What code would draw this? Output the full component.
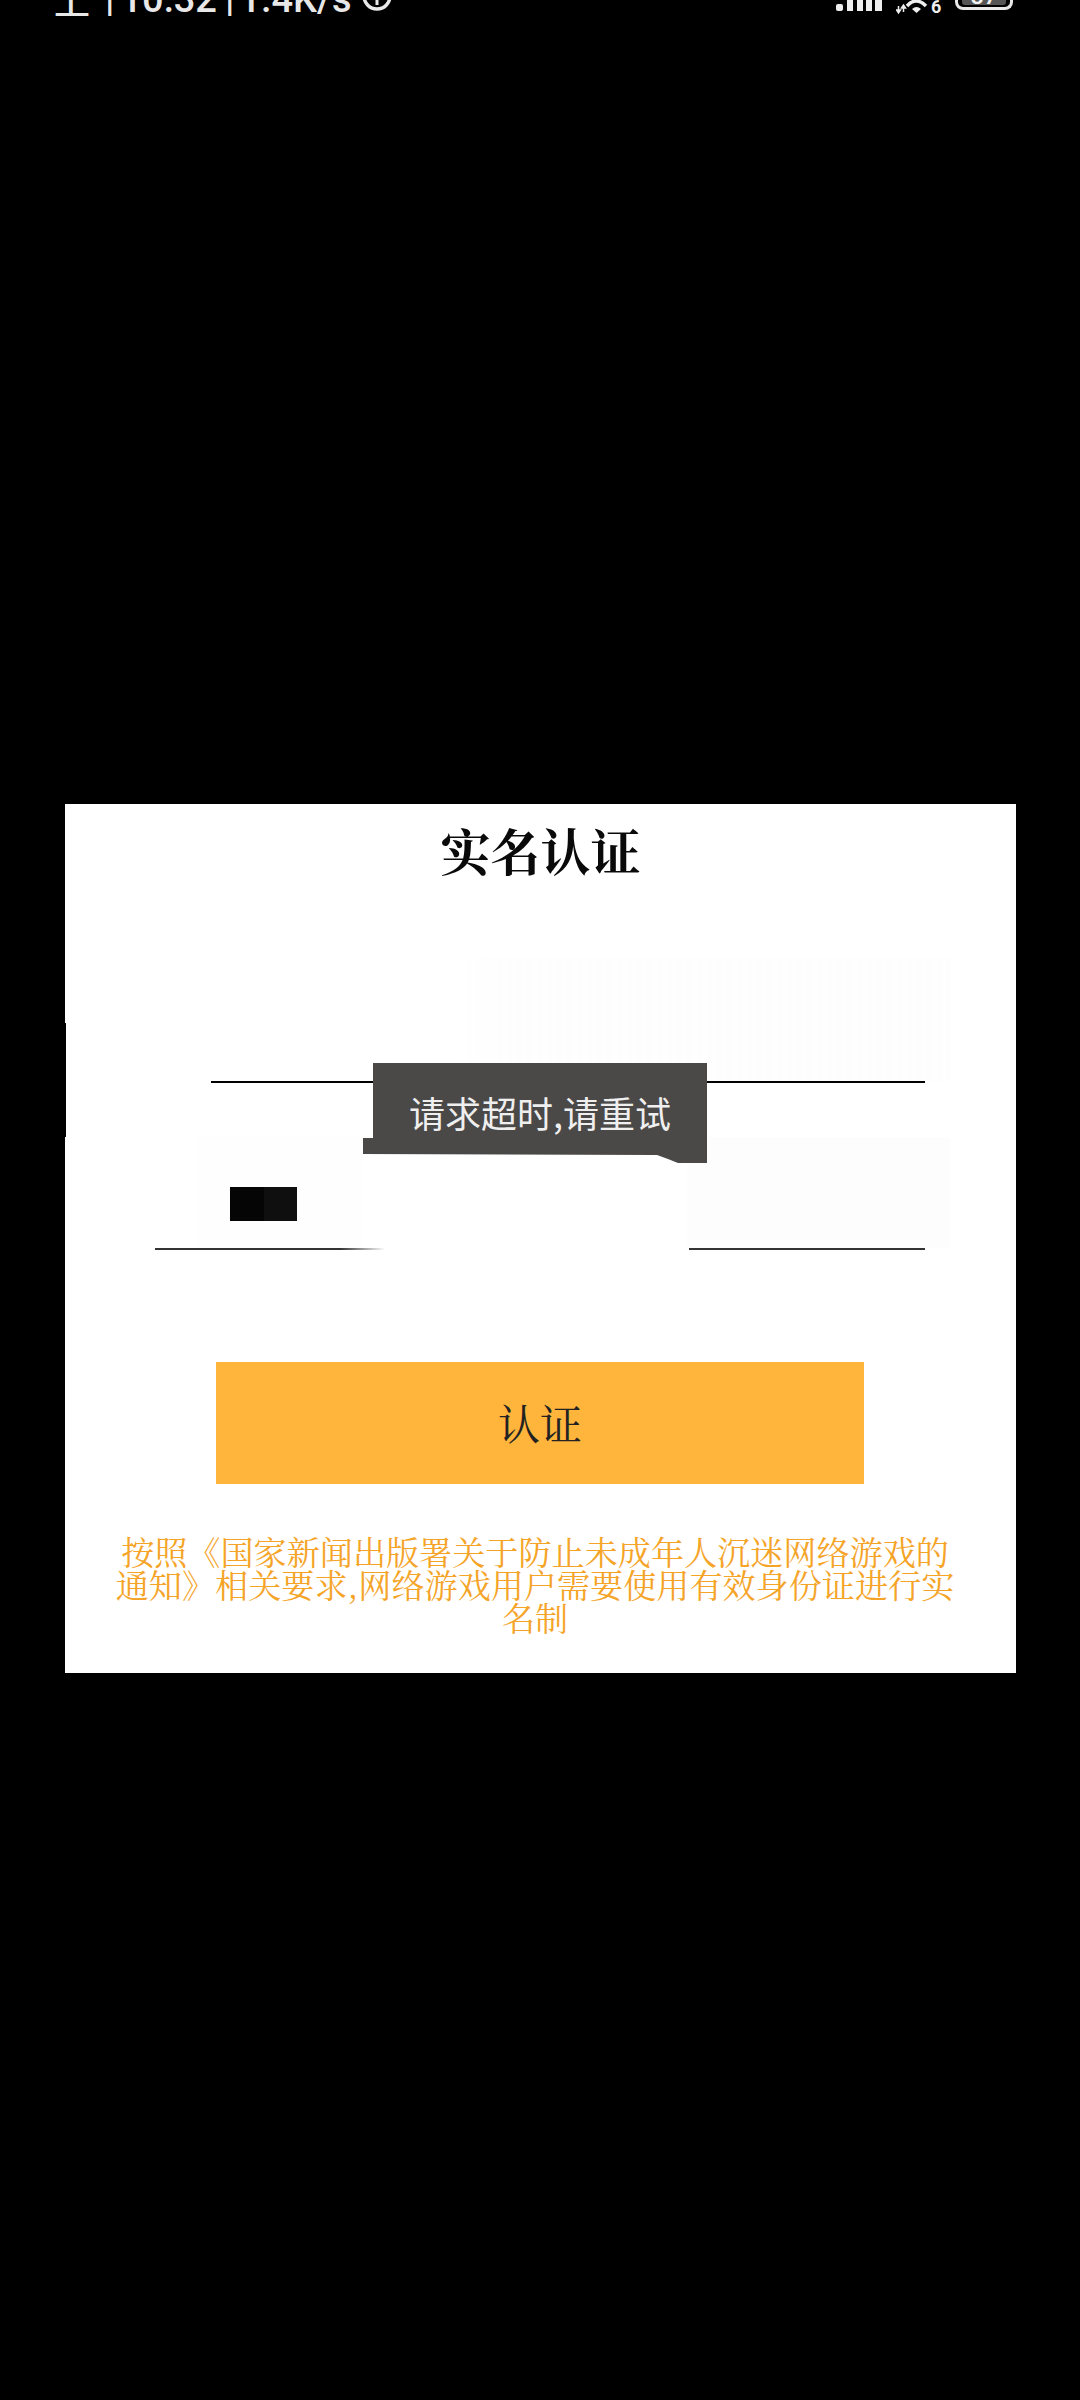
<div class="page">
  <header class="status">
    <span class="st up">上</span>
    <span class="st sep">|</span>
    <span class="st time">10:32</span>
    <span class="st sep2">|</span>
    <span class="st speed">1.4K/s</span>
    <svg class="clock" width="30" height="16" viewBox="0 0 30 16" aria-hidden="true">
      <circle cx="15" cy="-4" r="13" fill="none" stroke="#e8e8e8" stroke-width="3.500"/>
      <path d="M15 -2V5" fill="none" stroke="#e8e8e8" stroke-width="3"/>
    </svg>
    <span class="spacer"></span>
    <svg class="signal" width="46" height="16" viewBox="0 0 46 16" aria-hidden="true">
      <rect x="0" y="4" width="7" height="7" rx="2" fill="#eee"/>
      <rect x="11" y="0" width="6" height="11" fill="#eee"/>
      <rect x="21" y="0" width="6" height="11" fill="#eee"/>
      <rect x="30" y="0" width="6" height="11" fill="#eee"/>
      <rect x="39" y="0" width="7" height="11" fill="#eee"/>
    </svg>
    <svg class="wifi" width="32" height="16" viewBox="0 0 32 16" aria-hidden="true">
      <path d="M2.500 6V13M0.500 10L2.500 13L4.500 10Z" stroke="#eee" stroke-width="1.500" fill="#eee"/>
      <path d="M7.500 12V5M5.500 8L7.500 5L9.500 8Z" stroke="#eee" stroke-width="1.500" fill="#eee"/>
      <path d="M11 6Q20 -4 30 6" fill="none" stroke="#eee" stroke-width="3.500"/>
      <path d="M16 9L20.500 13L25 9Q20.500 5 16 9Z" fill="#eee"/>
    </svg>
    <span class="six">6</span>
    <div class="battery"><span class="level">87</span></div>
  </header>

  <main class="card">
    <h1 class="title">实名认证</h1>

    <div class="field one"></div>
    <div class="rule rule-one"></div>

    <div class="field two">
      <div class="mask"><i class="m1"></i><i class="m2"></i></div>
    </div>
    <div class="rule rule-two"></div>

    <button class="submit">认证</button>

    <p class="notice">按照《国家新闻出版署关于防止未成年人沉迷网络游戏的通知》相关要求,网络游戏用户需要使用有效身份证进行实名制</p>

    <div class="toast">请求超时,请重试</div>
    <div class="notch"></div>
  </main>
</div>

<style>
  :global(body) {
    margin: 0;
    background: #000;
  }
  .page {
    width: 1080px;
    height: 2400px;
    background: #000;
    overflow: hidden;
  }
  .status {
    height: 16px;
    display: flex;
    align-items: flex-end;
    overflow: hidden;
    padding-left: 54px;
    padding-right: 67px;
    color: #e8e8e8;
    font-family: Roboto, "Noto Sans CJK SC", sans-serif;
  }
  .st {
    font-size: 38px;
    line-height: 38px;
    font-weight: 500;
    flex: none;
    margin-bottom: -2px;
  }
  .up { font-family: "Noto Sans CJK SC", sans-serif; font-size: 36px; }
  .sep { margin-left: 15px; }
  .time { margin-left: 6px; }
  .sep2 { margin-left: 8px; }
  .speed { margin-left: 5px; }
  .clock { margin-left: 10px; flex: none; }
  .spacer { flex: 1; }
  .signal { flex: none; margin-right: 14px; }
  .wifi { flex: none; }
  .six {
    flex: none;
    font-size: 18px;
    line-height: 18px;
    font-weight: 700;
    margin-left: 3px;
    width: 11px;
    color: #eee;
  }
  .battery {
    flex: none;
    box-sizing: border-box;
    width: 58px;
    height: 16px;
    margin-left: 13px;
    margin-bottom: 6px;
    border: 3px solid #e8e8e8;
    border-top: 0;
    border-radius: 0 0 8px 8px;
    padding: 0 4px 2px;
    display: flex;
    align-items: flex-end;
    justify-content: center;
  }
  .level {
    width: 100%;
    background: #555;
    border-radius: 0 0 3px 3px;
    color: #f2f2f2;
    font-size: 24px;
    line-height: 18px;
    font-weight: 500;
    text-align: center;
  }

  .card {
    position: relative;
    box-sizing: border-box;
    width: 951px;
    height: 869px;
    margin-top: 788px;
    margin-left: 65px;
    background: #fff;
    overflow: hidden;
    display: flex;
    flex-direction: column;
    align-items: flex-start;
  }
  .title {
    align-self: center;
    margin: 15px 0 0;
    height: 65px;
    font: 700 50px/60px "Noto Serif CJK SC", "Source Han Serif SC", "Liberation Serif", "Noto Sans CJK SC", serif;
    color: #0a0a0a;
  }
  .field {
    box-sizing: border-box;
    margin-left: 132px;
    width: 753px;
  }
  .one {
    margin-top: 74px;
    height: 123px;
    background:
      linear-gradient(90deg, #fff 0, #fff 260px, rgba(255,255,255,0) 310px),
      repeating-linear-gradient(90deg, #fdfdfd 0 5px, #fefefe 5px 10px);
  }
  .two {
    margin-top: 54px;
    height: 111px;
    padding-top: 50px;
    padding-left: 33px;
    background: linear-gradient(90deg, #fefefe 0, #fefefe 165px, #fff 165px, #fff 490px, #fdfdfd 490px);
  }
  .mask {
    display: flex;
    width: 67px;
    height: 34px;
  }
  .m1 { flex: 1; background: #050505; }
  .m2 { flex: 1; background: #0f0f0f; }
  .rule {
    flex: none;
    height: 2px;
  }
  .rule-one {
    width: 714px;
    margin-left: 146px;
    background: #000;
  }
  .rule-two {
    width: 770px;
    margin-left: 90px;
    background: linear-gradient(90deg, #333 0, #333 185px, #fff 230px, #fff 534px, #333 534px);
  }
  .submit {
    flex: none;
    margin: 112px 0 0 151px;
    width: 648px;
    height: 122px;
    border: 0;
    padding: 0 0 3px;
    background: #ffb43c;
    color: #222;
    font: 400 42px/1 "Noto Serif CJK SC", "Source Han Serif SC", "Liberation Serif", "Noto Sans CJK SC", serif;
  }
  .notice {
    flex: none;
    margin: 50px 0 0 47px;
    width: 846px;
    text-align: center;
    color: #f5a428;
    font: 400 33.12px/33px "Noto Serif CJK SC", "Source Han Serif SC", "Liberation Serif", "Noto Sans CJK SC", serif;
  }
  .toast {
    position: absolute;
    left: 298px;
    top: 259px;
    width: 344px;
    height: 100px;
    box-sizing: border-box;
    padding: 31px 0 0 10px;
    background: #4a4948;
    color: #efefef;
    text-align: center;
    font: 400 36px/36px "Noto Sans CJK SC", sans-serif;
    clip-path: polygon(10px 0, 344px 0, 344px 100px, 315px 100px, 305px 96px, 294px 92px, 0 91px, 0 75px, 10px 75px);
  }
  .notch {
    position: absolute;
    left: 0;
    top: 219px;
    width: 1px;
    height: 114px;
    background: #000;
  }
</style>
